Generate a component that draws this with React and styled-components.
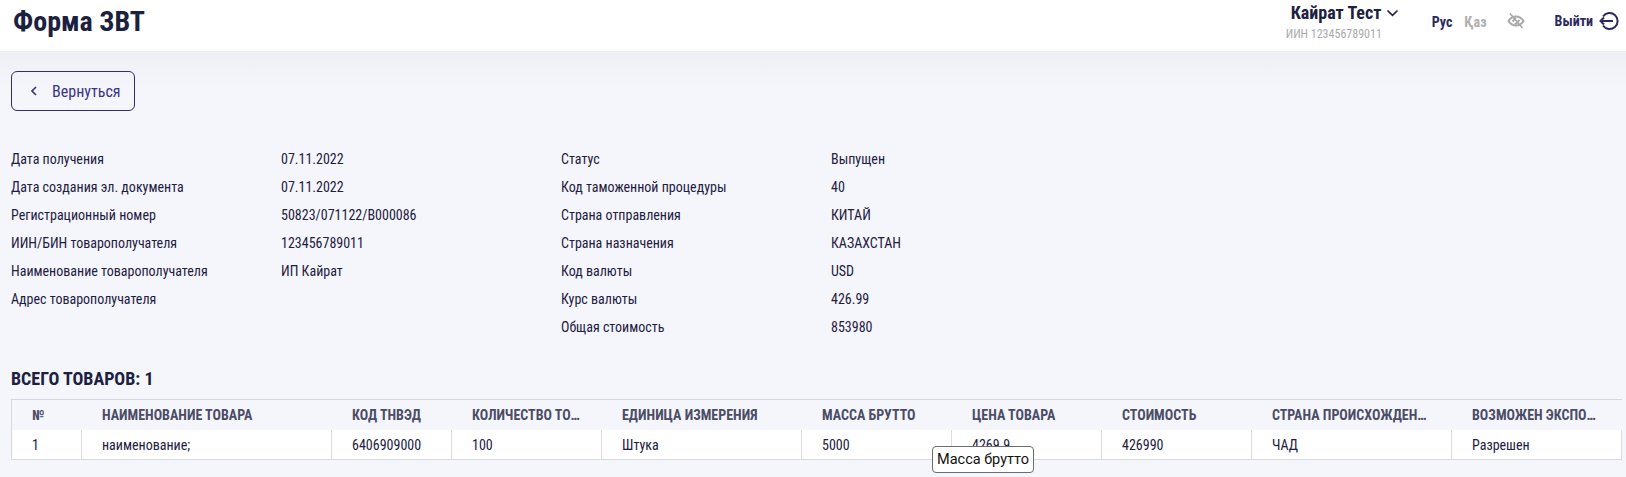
import React from "react";
import styled, { createGlobalStyle } from "styled-components";

const Global = createGlobalStyle`
  html, body { margin: 0; padding: 0; }
  body { background: #f5f6fc; font-family: "Roboto Condensed", "Liberation Sans Narrow", Roboto, sans-serif; font-stretch: 75%; color: #1d2040; overflow: hidden; }
`;
const Page = styled.div`
  width: 1626px; height: 477px; position: relative; overflow: hidden;
  background: linear-gradient(180deg, #eeeff4 51px, #f5f6fc 90px);
`;
const Header = styled.header`
  height: 51px; background: #fff; display: flex; align-items: flex-start; justify-content: space-between; box-sizing: border-box;
`;
const Title = styled.h1`
  margin: 4px 0 0 13px; font-size: 28px; line-height: 36px; font-weight: 700; color: #1c2140;
`;
const HeaderRight = styled.div`
  display: flex; align-items: flex-start;
`;
const User = styled.div`
  width: 117px; margin-right: 29px; display: flex; flex-direction: column; align-items: flex-start;
`;
const UserName = styled.div`
  display: flex; align-items: center; gap: 5px; font-size: 18px; line-height: 22px; margin: 2px 0 0 5px; font-weight: 700; color: #1c2140; white-space: nowrap;
`;
const Iin = styled.div`
  font-size: 12px; line-height: 14px; margin-top: 3px; color: #aaaaaa; white-space: nowrap;
`;
const Lang = styled.span`
  font-size: 14px; line-height: 16px; font-weight: 700; margin-top: 14px; margin-right: ${p => (p.$active ? "12px" : "14px")}; color: ${p => (p.$active ? "#2c2a5e" : "#aeaeae")};
`;
const EyeSlot = styled.span`
  margin: 12px 30px 0 6px; color: #a9a9a9; display: flex;
`;
const Logout = styled.div`
  display: flex; align-items: center; gap: 6px; font-size: 14px; font-weight: 700; color: #2c2a5e; margin-top: 11px; margin-right: 7px;
`;
const Main = styled.main`
  padding: 20px 0 0 11px;
`;
const BackButton = styled.button`
  width: 124px; height: 40px; border: 1px solid #342c7a; border-radius: 6px; background: transparent; color: #3a3487; font: inherit; font-size: 16px;
  display: flex; align-items: center; padding: 0 0 0 18px; gap: 14px; box-sizing: border-box;
`;
const Info = styled.div`
  display: grid; grid-template-columns: 550px 550px; margin-top: 34px;
`;
const InfoColumn = styled.div`
  display: flex; flex-direction: column;
`;
const InfoRow = styled.div`
  display: grid; grid-template-columns: 270px 1fr; height: 28px; line-height: 28px; font-size: 14px; color: #1d2040;
`;
const Total = styled.h2`
  margin: 26px 0 0; font-size: 18px; line-height: 24px; font-weight: 700; color: #1c2140;
`;
const Table = styled.div`
  margin-top: 8px; width: 1611px; border-top: 1px solid #d5d6de; border-left: 1px solid #d5d6de; box-sizing: border-box;
`;
const Row = styled.div`
  display: grid; grid-template-columns: 70px 250px 120px 150px 200px 150px 150px 150px 200px 170px;
`;
const HeadCell = styled.div`
  height: 30px; line-height: 30px; padding: 0 20px; box-sizing: border-box; font-size: 14px; font-weight: 700; color: #4b4d66;
  white-space: nowrap; overflow: hidden; text-overflow: ellipsis;
`;
const Cell = styled.div`
  height: 30px; line-height: 30px; padding: 0 20px; background: #fff; box-sizing: border-box; font-size: 14px; color: #1d2040;
  border-bottom: 1px solid #d9d9df; border-right: 1px solid #dcdce2;
`;
const Tooltip = styled.div`
  position: absolute; left: 932px; top: 446px; height: 27px; padding: 0 4px; box-sizing: border-box; background: #fff; border: 1px solid #6c6c6c; border-radius: 4px;
  font-family: Roboto, sans-serif; font-stretch: 100%; font-size: 14.5px; line-height: 26px; color: #111; white-space: nowrap;
`;

const left = [
  ["Дата получения", "07.11.2022"],
  ["Дата создания эл. документа", "07.11.2022"],
  ["Регистрационный номер", "50823/071122/B000086"],
  ["ИИН/БИН товарополучателя", "123456789011"],
  ["Наименование товарополучателя", "ИП Кайрат"],
  ["Адрес товарополучателя", ""],
];
const right = [
  ["Статус", "Выпущен"],
  ["Код таможенной процедуры", "40"],
  ["Страна отправления", "КИТАЙ"],
  ["Страна назначения", "КАЗАХСТАН"],
  ["Код валюты", "USD"],
  ["Курс валюты", "426.99"],
  ["Общая стоимость", "853980"],
];
const heads = ["№", "НАИМЕНОВАНИЕ ТОВАРА", "КОД ТНВЭД", "КОЛИЧЕСТВО ТОВАРА", "ЕДИНИЦА ИЗМЕРЕНИЯ", "МАССА БРУТТО", "ЦЕНА ТОВАРА", "СТОИМОСТЬ", "СТРАНА ПРОИСХОЖДЕНИЯ", "ВОЗМОЖЕН ЭКСПОРТ"];
const cells = ["1", "наименование;", "6406909000", "100", "Штука", "5000", "4269.9", "426990", "ЧАД", "Разрешен"];

export default function App() {
  return (
    <Page>
      <Global />
      <Header>
        <Title>Форма ЗВТ</Title>
        <HeaderRight>
          <User>
            <UserName>
              Кайрат Тест
              <svg width="13" height="8" viewBox="0 0 13 8" fill="none" stroke="#1c2140" strokeWidth="1.7"><path d="M1.500 1.500 6.500 6.300l5-4.800" /></svg>
            </UserName>
            <Iin>ИИН 123456789011</Iin>
          </User>
          <Lang $active>Рус</Lang>
          <Lang>Қаз</Lang>
          <EyeSlot>
            <svg width="18" height="18" viewBox="0 0 18 18" fill="none" stroke="currentColor" strokeWidth="2"><path d="M1.500 9c2-3.200 4.700-4.600 7.500-4.600s5.500 1.400 7.500 4.600c-2 3.200-4.700 4.600-7.500 4.600S3.500 12.200 1.500 9Z" /><path d="M5.500 9.500 9 6M8 12.500l4.500-4.500" /><path d="M3 1.500 15.500 16" strokeWidth="1.600" /></svg>
          </EyeSlot>
          <Logout>
            Выйти
            <svg width="20" height="20" viewBox="0 0 20 20" fill="none" stroke="#2c2a5e" strokeWidth="2"><path d="M4 5.500A8 8 0 1 1 4 14.500" /><path d="M1.500 10H14M5 6.500 1.500 10 5 13.500" /></svg>
          </Logout>
        </HeaderRight>
      </Header>
      <Main>
        <BackButton>
          <svg width="8" height="10" viewBox="0 0 8 10" fill="none" stroke="#342c7a" strokeWidth="1.6"><path d="M6 1 2 5l4 4" /></svg>
          Вернуться
        </BackButton>
        <Info>
          <InfoColumn>{left.map(r => <InfoRow key={r[0]}><span>{r[0]}</span><span>{r[1]}</span></InfoRow>)}</InfoColumn>
          <InfoColumn>{right.map(r => <InfoRow key={r[0]}><span>{r[0]}</span><span>{r[1]}</span></InfoRow>)}</InfoColumn>
        </Info>
        <Total>ВСЕГО ТОВАРОВ: 1</Total>
        <Table>
          <Row>{heads.map(h => <HeadCell key={h}>{h}</HeadCell>)}</Row>
          <Row>{cells.map(c => <Cell key={c}>{c}</Cell>)}</Row>
        </Table>
      </Main>
      <Tooltip>Масса брутто</Tooltip>
    </Page>
  );
}
